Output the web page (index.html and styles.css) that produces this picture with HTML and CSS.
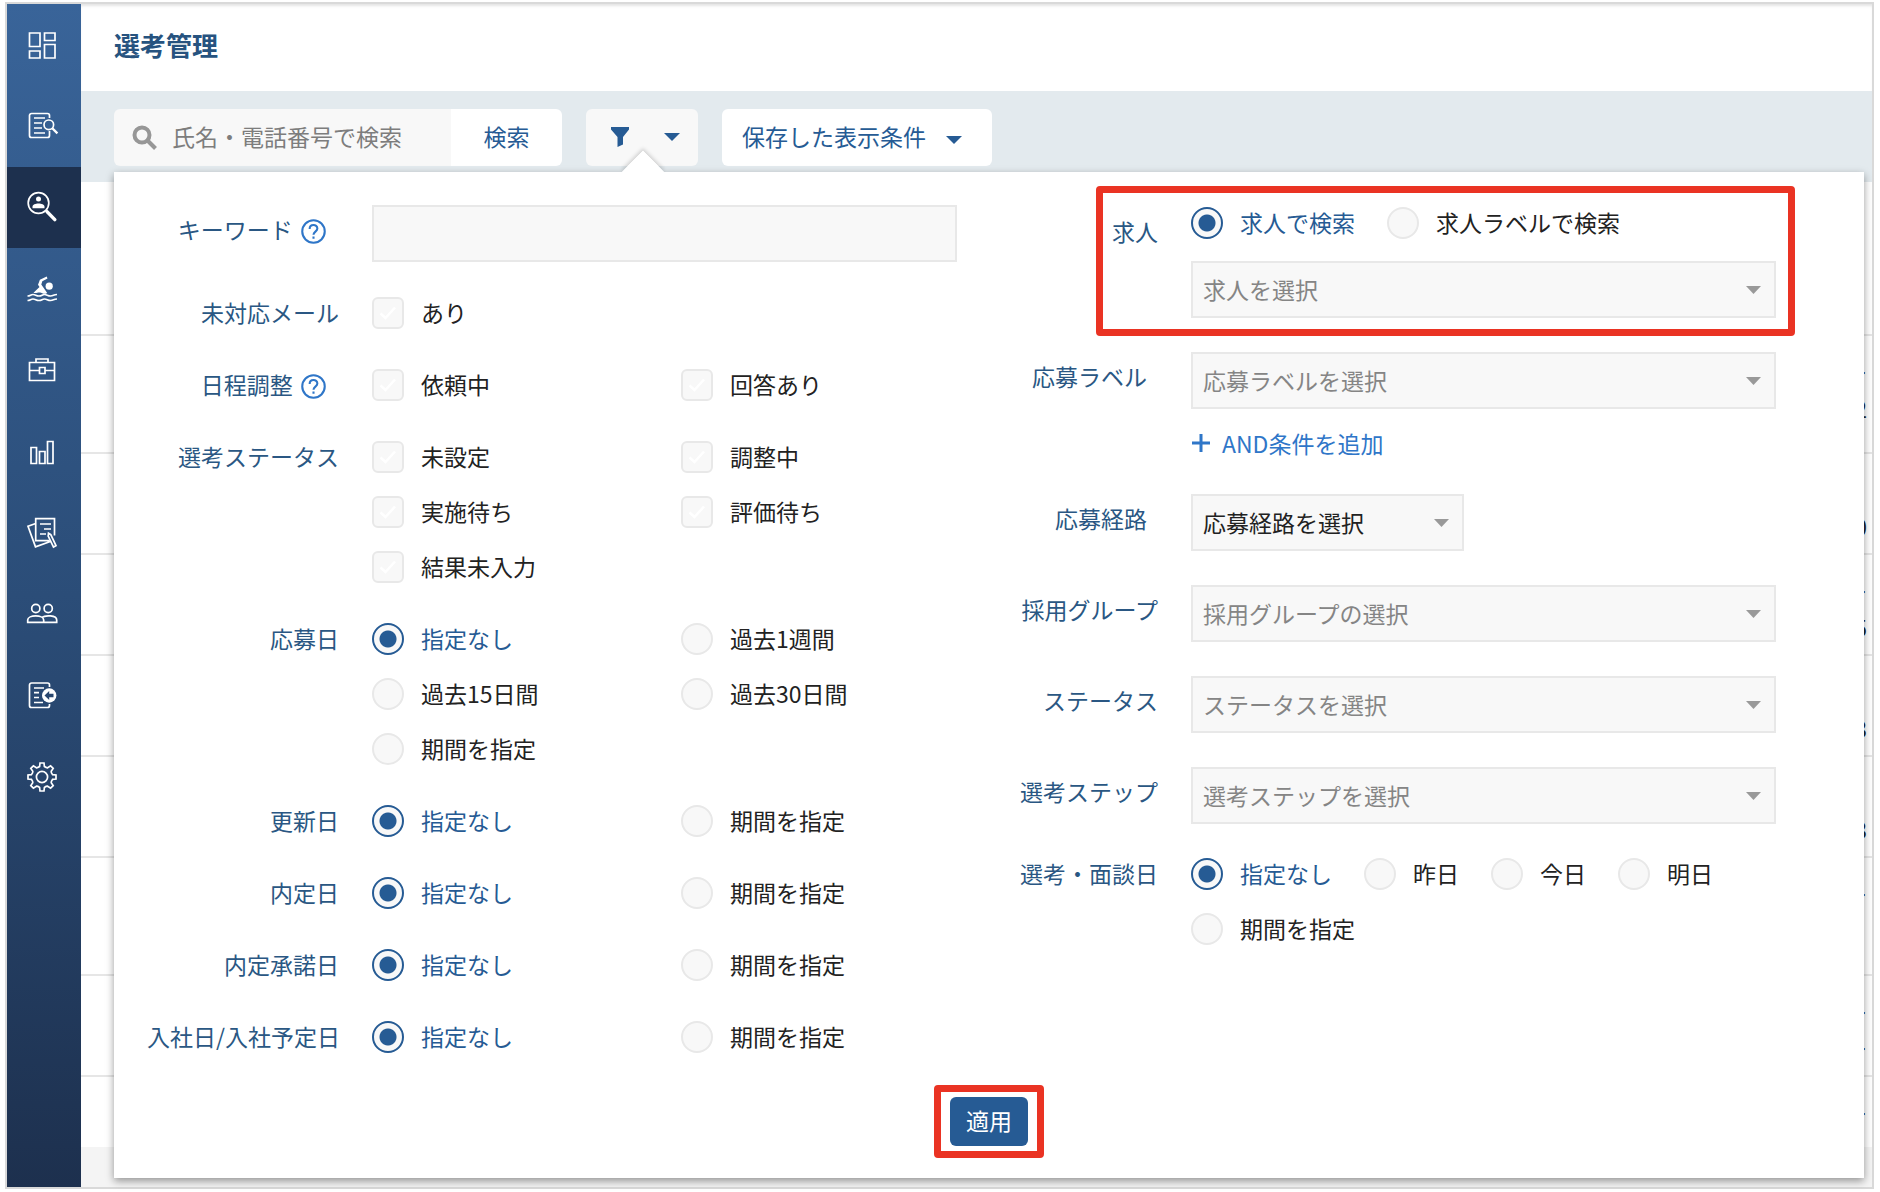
FILE: index.html
```html
<!DOCTYPE html>
<html lang="ja">
<head>
    <meta charset="UTF-8">
    <meta name="viewport" content="width=device-width, initial-scale=1.0">
    <title>選考管理</title>
    <link rel="stylesheet" href="styles.css">
</head>
<body>

<div class="app">
    <nav class="sidebar">
        <div class="nav-list">
            <a href="#" class="nav-item" aria-label="ダッシュボード">
                <svg viewBox="0 0 30 30"><path d="M2.5 3h10.5v13.5H2.5zM17.5 3h10.5v7.5H17.5zM2.5 21h10.5v7H2.5zM17.5 14.5h10.5V28H17.5z"/></svg>
            </a>
            <a href="#" class="nav-item" aria-label="書類検索">
                <svg viewBox="0 0 30 30"><path d="M22.5 7V4.5a2 2 0 0 0-2-2h-16a2 2 0 0 0-2 2v20a2 2 0 0 0 2 2h16a2 2 0 0 0 2-2V20M7 7h11M7 12h8M7 17h8M7 22h11"/><circle cx="21.8" cy="13.8" r="4.8"/><path class="mid" d="M25.4 17.4l5 5"/></svg>
            </a>
            <a href="#" class="nav-item active" aria-label="選考管理">
                <svg viewBox="0 0 30 30"><circle cx="11.5" cy="11" r="10.3"/><circle class="fill" cx="11.5" cy="7" r="2.5"/><path class="fill" d="M5.5 16.2v-1.4c0-4.4 12-4.4 12 0v1.4z"/><path class="thick" d="M20 19.6l7.8 8"/></svg>
            </a>
            <a href="#" class="nav-item" aria-label="タレントプール">
                <svg viewBox="0 0 30 30"><circle class="fill" cx="22.2" cy="12.2" r="3.6"/><path class="fill" d="M19.7 2.5l.8 2-5.2 2.7-1 3.3 5.9 8.5c-3 2-5 0-7.2-.5-2.3-.4-4 1.3-6.5.2l6-5.7-1.500-2.3 1.9-5z"/><path d="M.5 22c3 0 3-1.5 5.5-1.5S9 22 12 22s3-1.5 5.500-1.500S20.500 22 23.500 22s3-1.500 6.500-1.500M.5 26.500c3 0 3-1.500 5.500-1.500s3 1.500 6 1.500 3-1.500 5.500-1.500 3 1.500 6 1.500 3-1.500 6.500-1.500"/></svg>
            </a>
            <a href="#" class="nav-item" aria-label="求人">
                <svg viewBox="0 0 30 30"><path d="M2.5 7.5h25v18h-25zM9 7.5V4h12v3.5M2.5 15.5h10M18 15.5h9.5M12.5 12.5h5.5v6h-5.5z"/></svg>
            </a>
            <a href="#" class="nav-item" aria-label="レポート">
                <svg viewBox="0 0 30 30"><path d="M4 10.5h5.5v16H4zM12.5 14.5h5.5v12h-5.5zM20.5 4.5H26v22h-5.5z"/></svg>
            </a>
            <a href="#" class="nav-item" aria-label="評価">
                <svg viewBox="0 0 30 30"><path d="M27.5 17.5V.7H8.7v22h14M8.7 5.5L1 8.2l7.5 20.6 15.5-5.5M13 6h11M17 11h7M13 16h6"/><path d="M21.5 15.2l-.3 2.8 5.3 11 2.5-1.3-5.2-11z"/></svg>
            </a>
            <a href="#" class="nav-item" aria-label="ユーザー">
                <svg viewBox="0 0 30 30"><circle cx="8.8" cy="9.5" r="4.1"/><circle cx="21.2" cy="9.5" r="4.1"/><path d="M.7 23.3V21c0-5.5 16-5.5 16 0v2.3zM16.7 23.3h13V21c0-5-11.500-5-15-2.500"/></svg>
            </a>
            <a href="#" class="nav-item" aria-label="取り込み">
                <svg viewBox="0 0 30 30"><path d="M22.5 6V4a2 2 0 0 0-2-2h-16a2 2 0 0 0-2 2v20.5a2 2 0 0 0 2 2h16a2 2 0 0 0 2-2V23M7 7h10M7 11.7h5M7 16.5h5M7 21.5h9"/><circle class="fill" cx="22.2" cy="14.5" r="7.2"/><path class="cut" d="M17.5 14.5l4.7-4.5v2.8h4.3v3.4h-4.3V19z"/></svg>
            </a>
            <a href="#" class="nav-item" aria-label="設定">
                <svg viewBox="0 0 30 30"><circle cx="15" cy="15" r="5.6"/><path d="M12.6 4.5L13 1h4l.4 3.5q2 1.500 3.300 1.300l2.900-2 2.600 2.600-2 2.900q-.2 1.300 1.300 3.300L29 13v4l-3.500.4q-1.500 2-1.300 3.300l2 2.900-2.600 2.600-2.900-2q-1.300-.2-3.300 1.300L17 29h-4l-.4-3.500q-2-1.500-3.300-1.300l-2.900 2-2.600-2.600 2-2.900q.2-1.300-1.300-3.300L1 17v-4l3.500-.4q1.500-2 1.300-3.300l-2-2.900 2.600-2.600 2.900 2q1.300.2 3.300-1.300z"/></svg>
            </a>
        </div>
    </nav>

    <main class="main">
        <header class="header">
            <h1>選考管理</h1>
        </header>

        <div class="toolbar">
            <form class="search">
                <label class="search-box">
                    <svg class="search-icon" viewBox="0 0 26 26"><circle cx="10" cy="10" r="7.5"/><path d="M15.5 15.5l8 8"/></svg>
                    <input type="text" placeholder="氏名・電話番号で検索" aria-label="氏名・電話番号で検索">
                </label>
                <button type="button">検索</button>
            </form>
            <button type="button" class="tool-btn filter-btn" aria-label="絞り込み">
                <svg width="18" height="20" viewBox="0 0 18 20"><path d="M0 0h18v2.5l-6 7.5v7.5L6.5 20V10L0 2.5z"/></svg>
                <span class="caret"></span>
            </button>
            <button type="button" class="tool-btn saved-btn">保存した表示条件 <span class="caret"></span></button>

            <section class="popover">
                <div class="columns">
                    <div class="column">
                        <div class="field field-text">
                            <div class="label">
                                <label for="keyword">キーワード</label>
                                <svg class="help" viewBox="0 0 24 24"><circle cx="12" cy="12" r="10.8"/><path d="M8.3 9.5c0-5 7.4-4.8 7.4-.3 0 2.8-3.7 3-3.7 5.8M12 16.8v2.2"/></svg>
                            </div>
                            <div class="control"><input class="text-input" type="text" id="keyword"></div>
                        </div>
                        <div class="field">
                            <div class="label">未対応メール</div>
                            <div class="control options">
                                <label class="option"><input type="checkbox">あり</label>
                            </div>
                        </div>
                        <div class="field">
                            <div class="label">日程調整
                                <svg class="help" viewBox="0 0 24 24"><circle cx="12" cy="12" r="10.8"/><path d="M8.3 9.5c0-5 7.4-4.8 7.4-.3 0 2.8-3.7 3-3.7 5.8M12 16.8v2.2"/></svg>
                            </div>
                            <div class="control options">
                                <label class="option"><input type="checkbox">依頼中</label>
                                <label class="option"><input type="checkbox">回答あり</label>
                            </div>
                        </div>
                        <div class="field">
                            <div class="label">選考ステータス</div>
                            <div class="control options">
                                <label class="option"><input type="checkbox">未設定</label>
                                <label class="option"><input type="checkbox">調整中</label>
                                <label class="option"><input type="checkbox">実施待ち</label>
                                <label class="option"><input type="checkbox">評価待ち</label>
                                <label class="option"><input type="checkbox">結果未入力</label>
                            </div>
                        </div>
                        <div class="field">
                            <div class="label">応募日</div>
                            <div class="control options">
                                <label class="option"><input type="radio" name="applied" checked>指定なし</label>
                                <label class="option"><input type="radio" name="applied">過去1週間</label>
                                <label class="option"><input type="radio" name="applied">過去15日間</label>
                                <label class="option"><input type="radio" name="applied">過去30日間</label>
                                <label class="option"><input type="radio" name="applied">期間を指定</label>
                            </div>
                        </div>
                        <div class="field">
                            <div class="label">更新日</div>
                            <div class="control options">
                                <label class="option"><input type="radio" name="updated" checked>指定なし</label>
                                <label class="option"><input type="radio" name="updated">期間を指定</label>
                            </div>
                        </div>
                        <div class="field">
                            <div class="label">内定日</div>
                            <div class="control options">
                                <label class="option"><input type="radio" name="offered" checked>指定なし</label>
                                <label class="option"><input type="radio" name="offered">期間を指定</label>
                            </div>
                        </div>
                        <div class="field">
                            <div class="label">内定承諾日</div>
                            <div class="control options">
                                <label class="option"><input type="radio" name="accepted" checked>指定なし</label>
                                <label class="option"><input type="radio" name="accepted">期間を指定</label>
                            </div>
                        </div>
                        <div class="field">
                            <div class="label">入社日/入社予定日</div>
                            <div class="control options">
                                <label class="option"><input type="radio" name="joined" checked>指定なし</label>
                                <label class="option"><input type="radio" name="joined">期間を指定</label>
                            </div>
                        </div>
                    </div>

                    <div class="column column-right">
                        <div class="field field-select highlight">
                            <label class="label" for="job">求人</label>
                            <div class="control">
                                <div class="inline-options">
                                    <label class="option"><input type="radio" name="job-type" checked>求人で検索</label>
                                    <label class="option"><input type="radio" name="job-type">求人ラベルで検索</label>
                                </div>
                                <select id="job"><option>求人を選択</option></select>
                            </div>
                        </div>
                        <div class="field field-select">
                            <label class="label label-inset" for="app-label">応募ラベル</label>
                            <div class="control">
                                <select id="app-label"><option>応募ラベルを選択</option></select>
                                <a href="#" class="add-link"><svg width="20" height="20" viewBox="0 0 20 20"><path d="M10 1v18M1 10h18"/></svg>AND条件を追加</a>
                            </div>
                        </div>
                        <div class="field field-select">
                            <label class="label label-inset" for="route">応募経路</label>
                            <div class="control">
                                <select id="route" class="select-short"><option>応募経路を選択</option></select>
                            </div>
                        </div>
                        <div class="field field-select">
                            <label class="label" for="group">採用グループ</label>
                            <div class="control">
                                <select id="group"><option>採用グループの選択</option></select>
                            </div>
                        </div>
                        <div class="field field-select">
                            <label class="label" for="status">ステータス</label>
                            <div class="control">
                                <select id="status"><option>ステータスを選択</option></select>
                            </div>
                        </div>
                        <div class="field field-select">
                            <label class="label" for="step">選考ステップ</label>
                            <div class="control">
                                <select id="step"><option>選考ステップを選択</option></select>
                            </div>
                        </div>
                        <div class="field">
                            <div class="label">選考・面談日</div>
                            <div class="control inline-options">
                                <label class="option"><input type="radio" name="interview" checked>指定なし</label>
                                <label class="option"><input type="radio" name="interview">昨日</label>
                                <label class="option"><input type="radio" name="interview">今日</label>
                                <label class="option"><input type="radio" name="interview">明日</label>
                                <label class="option"><input type="radio" name="interview">期間を指定</label>
                            </div>
                        </div>
                    </div>
                </div>
                <div class="popover-footer">
                    <div class="apply-frame"><button type="button" class="apply-btn">適用</button></div>
                </div>
            </section>
        </div>

        <table class="list">
            <tr class="list-head"><td></td></tr>
            <tr class="tall"><td>ー<br>2</td></tr>
            <tr><td><br>0</td></tr>
            <tr><td>ー<br>5</td></tr>
            <tr><td><br>3</td></tr>
            <tr><td><br>3</td></tr>
            <tr class="tall"><td>ー</td></tr>
            <tr><td>ー<br>ー</td></tr>
            <tr class="last"><td>ー</td></tr>
        </table>
    </main>
</div>

</body>
</html>
```
FILE: styles.css
```css
* {
    box-sizing: border-box;
}
body {
    margin: 0;
    padding: 2px 6px 3px 5px;
    font-family: "Noto Sans CJK JP", sans-serif;
    font-size: 23px;
    line-height: 30px;
    color: #222;
    background-color: #fff;
}
button, input, select {
    font: inherit;
    color: inherit;
    margin: 0;
}
button {
    border: none;
    cursor: pointer;
}
.app {
    display: flex;
    min-height: calc(100vh - 5px);
    border: 2px solid #d9d9d9;
}

/* Sidebar */
.sidebar {
    width: 74px;
    flex-shrink: 0;
    background: linear-gradient(#396499, #2b4d78 50%, #1d304e);
}
.nav-list {
    display: grid;
    grid-auto-rows: 1fr;
    height: 814px;
}
.nav-item {
    display: flex;
    align-items: center;
    justify-content: center;
    padding-right: 4px;
}
.nav-item.active {
    background-color: #1d304e;
}
.nav-item svg {
    width: 30px;
    height: 30px;
    overflow: visible;
    fill: none;
    stroke: #fff;
    stroke-width: 1.7;
}
.nav-item .mid {
    stroke-width: 2.2;
}
.nav-item .thick {
    stroke-width: 3.5;
    stroke-linecap: round;
}
.nav-item .fill {
    fill: #fff;
    stroke: none;
}
.nav-item .cut {
    fill: #28466e;
    stroke: none;
}

/* Header and toolbar */
.main {
    flex: 1;
    min-width: 0;
    display: flex;
    flex-direction: column;
    background-color: #f4f4f4;
}
.header {
    height: 87px;
    padding: 23px 33px;
    background-color: #fff;
    box-shadow: inset 0 3px 3px -1px #e4e4e4;
}
.header h1 {
    margin: 0;
    font-size: 26px;
    line-height: 36px;
    color: #27537f;
}
.toolbar {
    position: relative;
    display: flex;
    gap: 24px;
    padding: 18px 33px 16px;
    background-color: #e3eaee;
}
.search {
    display: flex;
    height: 57px;
    border-radius: 6px;
    overflow: hidden;
}
.search-box {
    display: flex;
    align-items: center;
    gap: 14px;
    width: 337px;
    padding-left: 18px;
    background-color: #f8f8f8;
}
.search-box input {
    width: 260px;
    padding: 0 0 4px;
    border: none;
    outline: none;
    background: none;
}
.search-box input::placeholder {
    color: #7d7d7d;
}
.search-icon {
    width: 26px;
    height: 26px;
    fill: none;
    stroke: #979797;
    stroke-width: 4;
}
.search button {
    width: 111px;
    padding: 0 0 4px;
    background-color: #fff;
    color: #265b94;
}
.tool-btn {
    display: flex;
    align-items: center;
    height: 57px;
    border-radius: 6px;
    background-color: #fff;
    color: #265b94;
}
.filter-btn {
    justify-content: space-between;
    width: 112px;
    padding: 0 18px 2px 25px;
    background-color: #f8f8f8;
    fill: #265b94;
}
.saved-btn {
    gap: 20px;
    padding: 0 30px 4px 20px;
}
.caret {
    border: 8px solid transparent;
    border-top-color: #265b94;
    border-bottom: none;
}
.saved-btn .caret {
    margin-top: 8px;
}

/* Filter popover */
.popover {
    position: absolute;
    z-index: 1;
    top: 81px;
    left: 33px;
    right: 8px;
    padding: 33px 88px 20px 33px;
    background-color: #fff;
    box-shadow: 0 3px 8px rgba(0, 0, 0, 0.4);
}
.popover::before {
    content: "";
    position: absolute;
    top: -15px;
    left: 514px;
    width: 30px;
    height: 30px;
    background: linear-gradient(135deg, #fff 50%, transparent 50%);
    box-shadow: -2px -2px 4px rgba(0, 0, 0, 0.15);
    transform: rotate(45deg);
    clip-path: polygon(-20% -20%, 120% -20%, -20% 120%);
}
.columns {
    display: grid;
    grid-template-columns: 1fr 1fr;
    gap: 9px;
}
.column-right {
    padding-top: 2px;
}
.field {
    position: relative;
    display: grid;
    grid-template-columns: 192px 1fr;
    gap: 33px;
    margin-bottom: 40px;
}
.field:last-child {
    margin-bottom: 0;
}
.field-text {
    margin-bottom: 35px;
}
.field-select {
    margin-bottom: 34px;
}
.field-text .label,
.field-select .label {
    padding-top: 9px;
}
.label {
    text-align: right;
    white-space: nowrap;
    color: #2a5783;
}
.label-inset {
    padding-right: 11px;
}
.help {
    width: 25px;
    height: 25px;
    margin: 0 13px 0 3px;
    vertical-align: -5px;
    fill: none;
    stroke: #2f76c8;
    stroke-width: 2;
}
.options {
    display: grid;
    grid-template-columns: 1fr 1fr;
    gap: 23px 33px;
}
.inline-options {
    display: flex;
    flex-wrap: wrap;
    gap: 23px 32px;
}
.option {
    display: flex;
    gap: 17px;
    height: 32px;
    white-space: nowrap;
    cursor: pointer;
}
.option:has(input[type="radio"]:checked) {
    color: #265b94;
}
.option input {
    appearance: none;
    width: 32px;
    height: 32px;
    border: 2px solid #e8e8e8;
    border-radius: 6px;
    background: #f8f8f8 center no-repeat;
}
.option input[type="checkbox"] {
    background-image: url("data:image/svg+xml,%3Csvg xmlns='http://www.w3.org/2000/svg' width='18' height='14' fill='none' stroke='white' stroke-width='2.5'%3E%3Cpath d='M1.5 7.5l5 4.5 9.5-10.5'/%3E%3C/svg%3E");
}
.option input[type="radio"] {
    border-radius: 50%;
}
.option input[type="radio"]:checked {
    border-color: #265b94;
    background-image: radial-gradient(circle, #265b94 8px, transparent 9px);
}
.text-input,
select {
    display: block;
    width: 100%;
    height: 57px;
    border: 2px solid #e8e8e8;
    border-radius: 0;
    background: #f8f8f8;
}
select {
    appearance: none;
    padding: 0 40px 2px 10px;
    color: #858585;
    background: #f8f8f8 url("data:image/svg+xml,%3Csvg xmlns='http://www.w3.org/2000/svg' width='15' height='8' fill='%23999'%3E%3Cpath d='M0 0h15L7.5 8z'/%3E%3C/svg%3E") right 13px center no-repeat;
}
.select-short {
    width: 273px;
    color: #222;
}
.highlight .inline-options {
    margin-bottom: 22px;
}
.highlight::after {
    content: "";
    position: absolute;
    top: -21px;
    right: -19px;
    bottom: -18px;
    left: 130px;
    border: 7px solid #ea3323;
    border-radius: 4px;
    pointer-events: none;
}
.add-link {
    display: flex;
    align-items: center;
    gap: 11px;
    margin: 19px 0 36px;
    color: #2f76c8;
    text-decoration: none;
}
.add-link svg {
    stroke: #2f76c8;
    stroke-width: 3;
}
.field-select:has(.add-link) {
    margin-bottom: 0;
}
.popover-footer {
    display: flex;
    justify-content: center;
    margin: 32px -55px 0 0;
}
.apply-frame {
    padding: 5px 9px;
    border: 7px solid #ea3323;
    border-radius: 4px;
}
.apply-btn {
    display: block;
    height: 49px;
    padding: 0 16px 4px;
    border-radius: 6px;
    background-color: #265b94;
    color: #fff;
}

/* Candidate list behind the popover */
.list {
    width: 100%;
    border-collapse: collapse;
    background-color: #fff;
}
.list td {
    height: 101px;
    padding: 18px 5px 0 0;
    border-bottom: 2px solid #e6e6e6;
    text-align: right;
    vertical-align: top;
    line-height: 36px;
}
.list .list-head td {
    height: 153px;
}
.list .tall td {
    height: 118px;
}
.list .last td {
    height: 71px;
    border-bottom: none;
}
```
